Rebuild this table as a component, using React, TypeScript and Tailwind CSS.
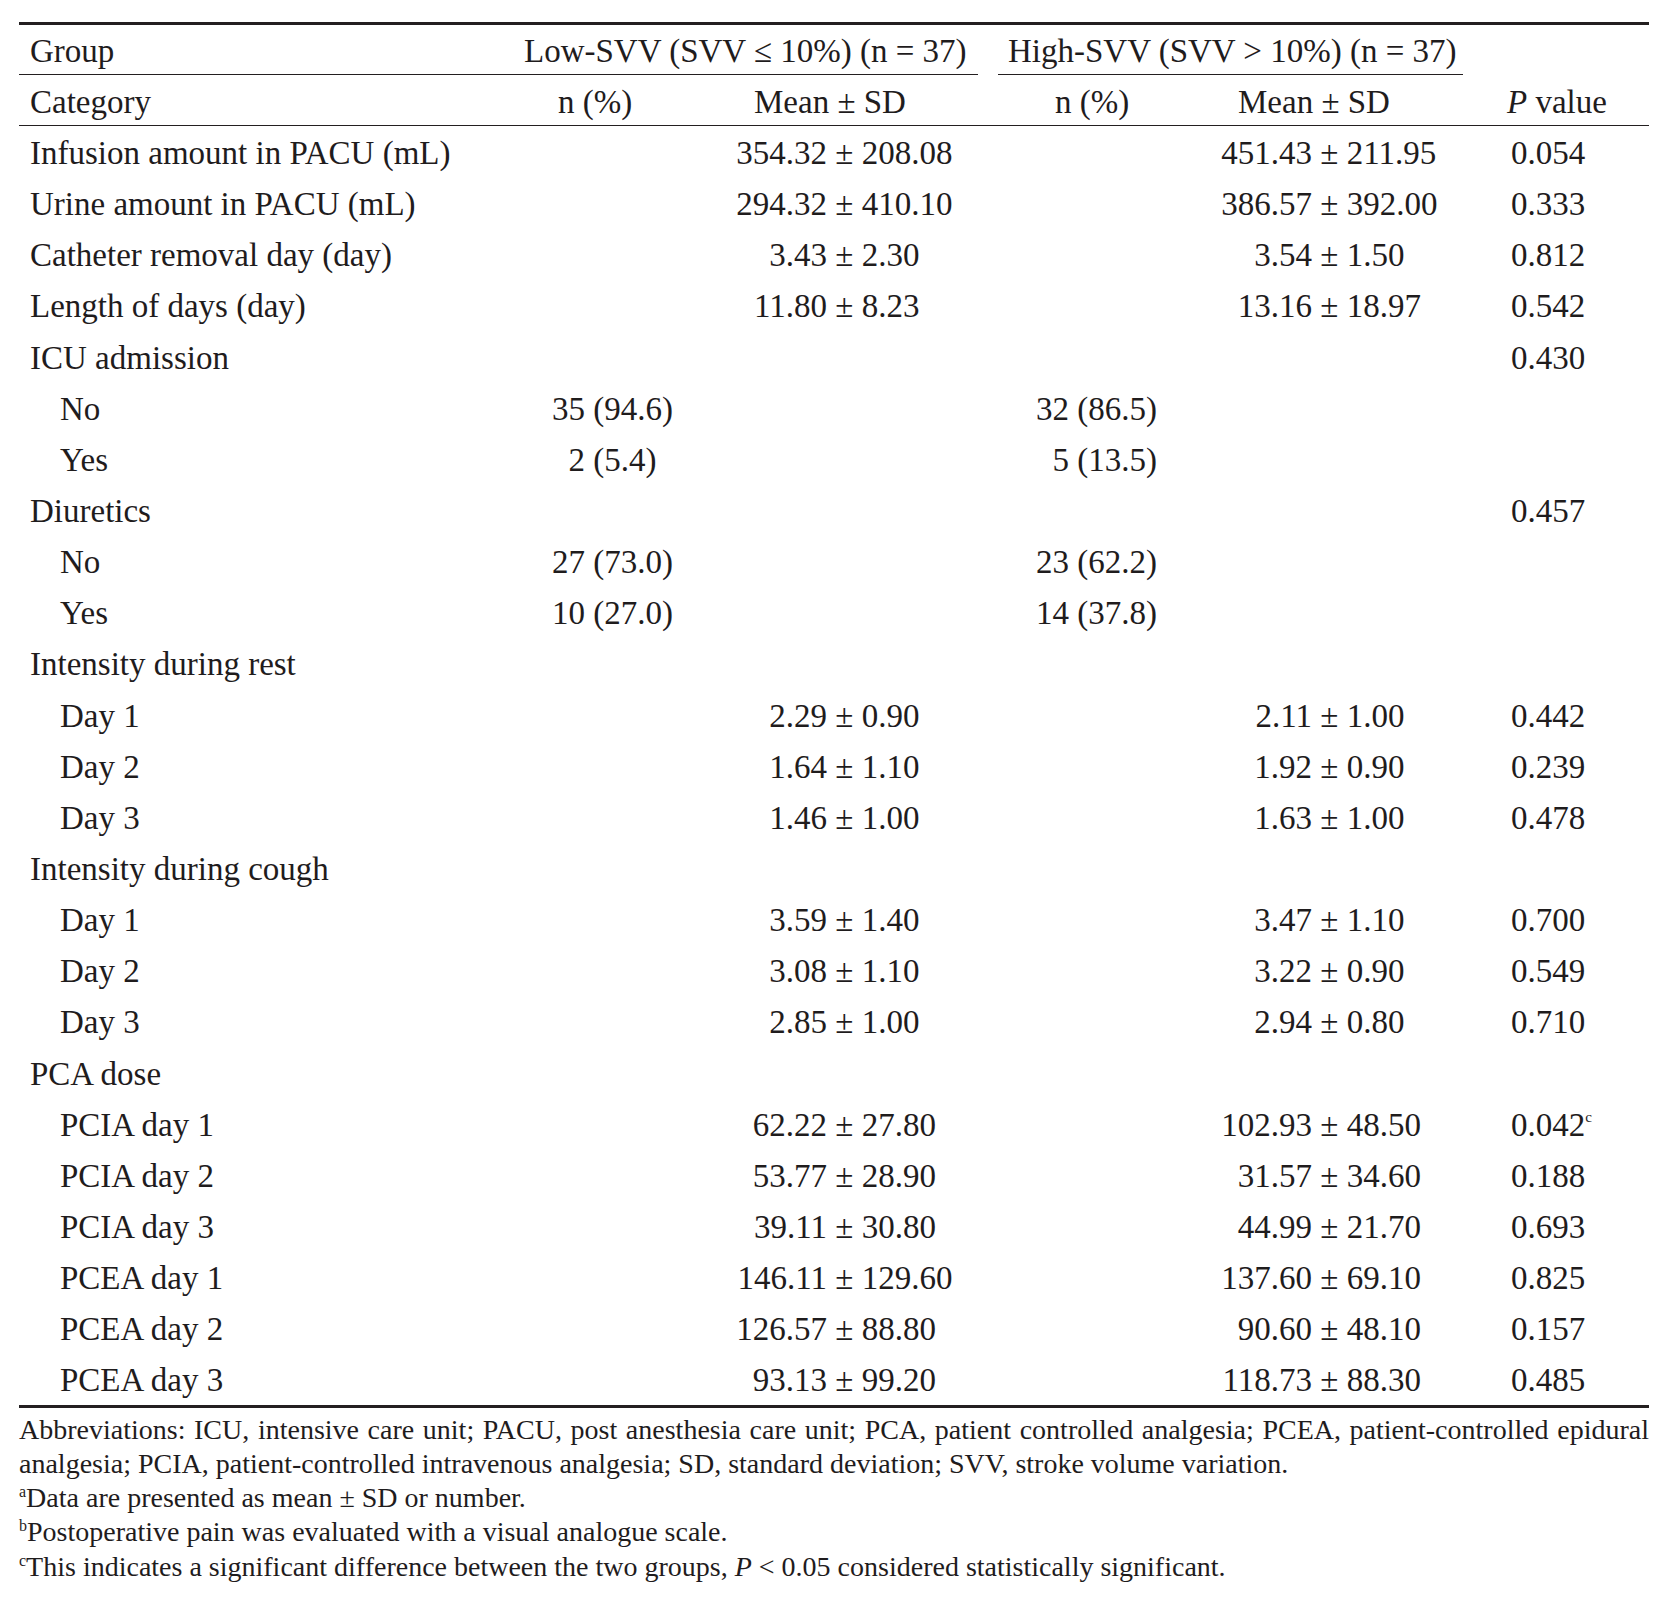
import React from "react";

type Row = {
  label: string;
  sub?: boolean;
  nLow?: [string, string];
  meanLow?: [string, string];
  nHigh?: [string, string];
  meanHigh?: [string, string];
  p?: string;
  sig?: boolean;
};

const rows: Row[] = [
  { label: "Infusion amount in PACU (mL)", meanLow: ["354.32", "208.08"], meanHigh: ["451.43", "211.95"], p: "0.054" },
  { label: "Urine amount in PACU (mL)", meanLow: ["294.32", "410.10"], meanHigh: ["386.57", "392.00"], p: "0.333" },
  { label: "Catheter removal day (day)", meanLow: ["3.43", "2.30"], meanHigh: ["3.54", "1.50"], p: "0.812" },
  { label: "Length of days (day)", meanLow: ["11.80", "8.23"], meanHigh: ["13.16", "18.97"], p: "0.542" },
  { label: "ICU admission", p: "0.430" },
  { label: "No", sub: true, nLow: ["35", "(94.6)"], nHigh: ["32", "(86.5)"] },
  { label: "Yes", sub: true, nLow: ["2", "(5.4)"], nHigh: ["5", "(13.5)"] },
  { label: "Diuretics", p: "0.457" },
  { label: "No", sub: true, nLow: ["27", "(73.0)"], nHigh: ["23", "(62.2)"] },
  { label: "Yes", sub: true, nLow: ["10", "(27.0)"], nHigh: ["14", "(37.8)"] },
  { label: "Intensity during rest" },
  { label: "Day 1", sub: true, meanLow: ["2.29", "0.90"], meanHigh: ["2.11", "1.00"], p: "0.442" },
  { label: "Day 2", sub: true, meanLow: ["1.64", "1.10"], meanHigh: ["1.92", "0.90"], p: "0.239" },
  { label: "Day 3", sub: true, meanLow: ["1.46", "1.00"], meanHigh: ["1.63", "1.00"], p: "0.478" },
  { label: "Intensity during cough" },
  { label: "Day 1", sub: true, meanLow: ["3.59", "1.40"], meanHigh: ["3.47", "1.10"], p: "0.700" },
  { label: "Day 2", sub: true, meanLow: ["3.08", "1.10"], meanHigh: ["3.22", "0.90"], p: "0.549" },
  { label: "Day 3", sub: true, meanLow: ["2.85", "1.00"], meanHigh: ["2.94", "0.80"], p: "0.710" },
  { label: "PCA dose" },
  { label: "PCIA day 1", sub: true, meanLow: ["62.22", "27.80"], meanHigh: ["102.93", "48.50"], p: "0.042", sig: true },
  { label: "PCIA day 2", sub: true, meanLow: ["53.77", "28.90"], meanHigh: ["31.57", "34.60"], p: "0.188" },
  { label: "PCIA day 3", sub: true, meanLow: ["39.11", "30.80"], meanHigh: ["44.99", "21.70"], p: "0.693" },
  { label: "PCEA day 1", sub: true, meanLow: ["146.11", "129.60"], meanHigh: ["137.60", "69.10"], p: "0.825" },
  { label: "PCEA day 2", sub: true, meanLow: ["126.57", "88.80"], meanHigh: ["90.60", "48.10"], p: "0.157" },
  { label: "PCEA day 3", sub: true, meanLow: ["93.13", "99.20"], meanHigh: ["118.73", "88.30"], p: "0.485" },
];

// first part right-aligned in a fixed box so the columns line up on the ± / the bracket
const Split = ({ v, box, sep }: { v?: [string, string]; box: string; sep: string }) => (
  <div className="flex whitespace-pre">
    {v && (
      <>
        <span className={`${box} text-right`}>{v[0]}</span>
        <span>
          {sep}
          {v[1]}
        </span>
      </>
    )}
  </div>
);

export default function App() {
  return (
    <div className="w-[1676px] min-h-[1602px] bg-white pl-[19px] pt-[22px] font-['Liberation_Serif',serif] text-[#1f1c1d]">
      <div className="w-[1630px] border-t-[3px] border-b-[3px] border-[#231f20] text-[33px]">
        <div className="grid grid-cols-[481px_225px_253px_238px_225px_208px]">
          {/* header row 1 */}
          <div className="h-[50px] border-b border-[#231f20] pl-[11px] pt-[2px] leading-[49px]">Group</div>
          <div className="col-span-2 h-[50px] border-b border-[#231f20] pl-[24px] pt-[2px] leading-[49px] whitespace-nowrap">
            Low-SVV (SVV ≤ 10%) (n = 37)
          </div>
          <div className="col-span-2 h-[50px]">
            <div className="ml-[20px] mr-[-22px] h-[50px] border-b border-[#231f20] pl-[10px] pt-[2px] leading-[49px] whitespace-nowrap">
              High-SVV (SVV &gt; 10%) (n = 37)
            </div>
          </div>
          <div className="h-[50px]" />

          {/* header row 2 */}
          <div className="h-[51px] border-b border-[#231f20] pl-[11px] pt-[2px] leading-[50px]">Category</div>
          <div className="h-[51px] border-b border-[#231f20] pl-[58px] pt-[2px] leading-[50px]">n (%)</div>
          <div className="h-[51px] border-b border-[#231f20] pl-[29px] pt-[2px] leading-[50px]">Mean ± SD</div>
          <div className="h-[51px] border-b border-[#231f20] pl-[77px] pt-[2px] leading-[50px]">n (%)</div>
          <div className="h-[51px] border-b border-[#231f20] pl-[22px] pt-[2px] leading-[50px]">Mean ± SD</div>
          <div className="h-[51px] border-b border-[#231f20] pl-[66px] pt-[2px] leading-[50px]">
            <i>P</i> value
          </div>

          {rows.map((r, i) => (
            <React.Fragment key={i}>
              <div className={`h-[51.15px] pt-[2px] leading-[51px] whitespace-nowrap ${r.sub ? "pl-[41px]" : "pl-[11px]"}`}>{r.label}</div>
              <div className="h-[51.15px] pt-[2px] leading-[51px]">
                <Split v={r.nLow} box="w-[85px]" sep=" " />
              </div>
              <div className="h-[51.15px] pt-[2px] leading-[51px]">
                <Split v={r.meanLow} box="w-[102px]" sep=" ± " />
              </div>
              <div className="h-[51.15px] pt-[2px] leading-[51px]">
                <Split v={r.nHigh} box="w-[91px]" sep=" " />
              </div>
              <div className="h-[51.15px] pt-[2px] leading-[51px]">
                <Split v={r.meanHigh} box="w-[96px]" sep=" ± " />
              </div>
              <div className="h-[51.15px] pl-[70px] pt-[2px] leading-[51px]">
                {r.p}
                {r.sig && <span className="relative -top-[14px] text-[15px] leading-none">c</span>}
              </div>
            </React.Fragment>
          ))}
        </div>
      </div>

      <div className="mt-[5px] w-[1630px] text-[28px] leading-[34px]">
        <p>
          <span className="block text-justify [text-align-last:justify]">
            Abbreviations: ICU, intensive care unit; PACU, post anesthesia care unit; PCA, patient controlled analgesia; PCEA, patient-controlled epidural
          </span>
          <span className="block">
            analgesia; PCIA, patient-controlled intravenous analgesia; SD, standard deviation; SVV, stroke volume variation.
          </span>
        </p>
        <p>
          <span className="relative -top-[10px] text-[16px] leading-none">a</span>Data are presented as mean ± SD or number.
        </p>
        <p>
          <span className="relative -top-[10px] text-[16px] leading-none">b</span>Postoperative pain was evaluated with a visual analogue scale.
        </p>
        <p className="mt-[1px]">
          <span className="relative -top-[10px] text-[16px] leading-none">c</span>This indicates a significant difference between the two groups, <i>P</i> &lt; 0.05 considered statistically significant.
        </p>
      </div>
    </div>
  );
}
